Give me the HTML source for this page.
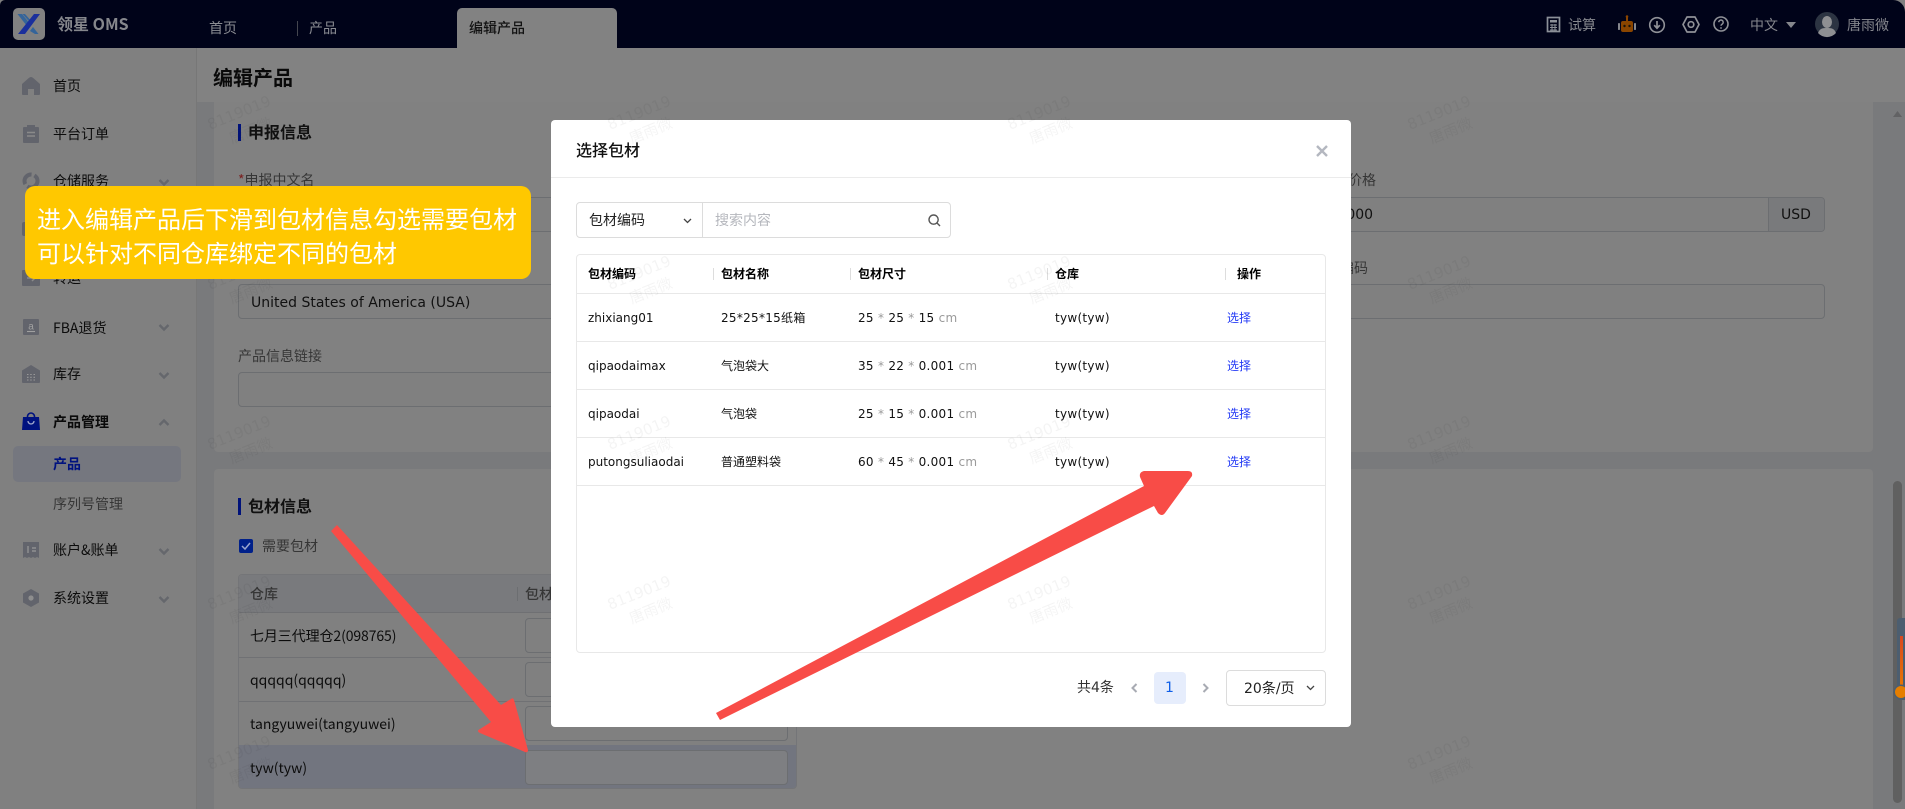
<!DOCTYPE html>
<html lang="zh"><head><meta charset="utf-8"><title>编辑产品</title>
<style>
*{box-sizing:border-box;margin:0;padding:0}
html,body{width:1905px;height:809px;overflow:hidden;background:#fff}
body{position:relative;font-family:"DejaVu Sans","Noto Sans CJK SC",sans-serif;font-size:14px;color:#111}
div{position:absolute}
.t{position:absolute;line-height:20px;white-space:nowrap}
.n{font-family:"Noto Sans CJK SC",sans-serif;font-size:14px}
.b{font-weight:700}
.s{color:#0c0c0c}
.l{color:#363636}
.inp{position:absolute;border:1px solid #6c6e71;border-radius:4px;background:#808080}
.bar{position:absolute;width:3px;height:17px;background:#00127a}
svg{position:absolute;overflow:visible}
.c{font-size:12px;color:#111}
.h{font-size:12px;font-weight:700;color:#000}
.d{letter-spacing:.28px}
.g{color:#9a9a9a}
.ln{position:absolute;height:1px;background:#e8e8e8;left:576px;width:750px}
.sp{position:absolute;width:1px;height:12px;top:268px;background:#ddd}
.sel{font-size:12px;color:#2239f5}
.ch{fill:none;stroke:#65676c;stroke-width:2.4}
.ic{fill:#62646c}
</style></head><body>

<!-- base page -->
<div style="left:0;top:0;width:1905px;height:809px;background:#808080"></div>
<div style="left:196px;top:48px;width:1px;height:761px;background:#777"></div>
<div style="left:197px;top:102px;width:1708px;height:707px;background:#797a7c"></div>
<div style="left:214px;top:102px;width:1659px;height:350px;background:#818181;border-radius:0 0 4px 4px"></div>
<div style="left:214px;top:469px;width:1659px;height:340px;background:#818181;border-radius:4px 4px 0 0"></div>
<div style="left:197px;top:48px;width:1708px;height:54px;background:#828282"></div>

<!-- header -->
<div style="left:0;top:0;width:1905px;height:48px;background:#000319;border-radius:5px 12px 0 0"></div>
<svg style="left:13px;top:8px" width="32" height="32" viewBox="0 0 32 32"><rect width="32" height="32" rx="5" fill="#818181"/><path d="M4.500 6H9l9 11-2.500 3z" fill="#34649a"/><path d="M9.500 6H12l8 9-1.200 1.500z" fill="#34649a"/><path d="M21 6h6L12 26H5z" fill="#1a2f9c"/><path d="M17 23l3-4 5.500 7H22z" fill="#34649a"/></svg>
<div class="t b" style="left:57px;top:13px;font-size:16px;color:#85878c;font-family:'Noto Sans CJK SC',sans-serif">领星 OMS</div>
<div class="t n" style="left:209px;top:18px;color:#8a8c92">首页</div>
<div style="left:297px;top:21px;width:1px;height:15px;background:#44464f"></div>
<div class="t n" style="left:309px;top:18px;color:#8a8c92">产品</div>
<div style="left:457px;top:8px;width:160px;height:40px;background:#828282;border-radius:5px 5px 0 0"></div>
<div class="t n" style="left:469px;top:18px;color:#111;font-weight:500">编辑产品</div>

<svg style="left:1546px;top:16px" width="16" height="17" viewBox="0 0 16 17" fill="none"><rect x="1.500" y="1.500" width="12" height="14" stroke="#8b9098" stroke-width="1.700"/><rect x="4" y="4" width="7" height="2.500" fill="#8b9098"/><path d="M4 9h7M4 11.500h7M4 14h7M6 8v7M9 8v7" stroke="#8b9098"/></svg>
<div class="t n" style="left:1568px;top:15px;color:#85878d">试算</div>
<svg style="left:1618px;top:15px" width="18" height="17" viewBox="0 0 18 17"><rect x="3" y="6" width="12" height="11" rx="2" fill="#8a4500"/><rect x="8" y="1.500" width="2" height="5" fill="#8a4500"/><circle cx="9" cy="1.500" r="1.300" fill="#8a4500"/><rect x="0" y="8" width="2" height="7" rx=".8" fill="#85878d"/><rect x="16" y="8" width="2" height="7" rx=".8" fill="#85878d"/><circle cx="6.500" cy="11" r="1.200" fill="#1a1208"/><circle cx="11.500" cy="11" r="1.200" fill="#1a1208"/></svg>
<svg style="left:1648px;top:17px" width="18" height="17" viewBox="0 0 18 17" fill="none"><circle cx="9" cy="8" r="7.300" stroke="#8f9197" stroke-width="1.600"/><path d="M9 4v7.500M6.200 8.200L9 11.200l2.800-3" stroke="#8f9197" stroke-width="1.700"/></svg>
<svg style="left:1682px;top:16px" width="18" height="17" viewBox="0 0 18 17" fill="none"><path d="M5 1h8l4 7.500-4 7.500H5L1 8.500z" stroke="#8f9197" stroke-width="1.700" stroke-linejoin="round"/><circle cx="9" cy="8.500" r="2.800" stroke="#8f9197" stroke-width="1.700"/></svg>
<svg style="left:1713px;top:16px" width="16" height="16" viewBox="0 0 16 16" fill="none"><circle cx="8" cy="8" r="7" stroke="#8f9197" stroke-width="1.600"/><path d="M5.800 6.200a2.200 2.200 0 1 1 3.400 1.900c-.8.500-1.200.9-1.200 1.700" stroke="#8f9197" stroke-width="1.500"/><circle cx="8" cy="12" r=".9" fill="#8f9197"/></svg>
<div class="t n" style="left:1750px;top:15px;color:#85878d">中文</div>
<svg style="left:1786px;top:22px" width="10" height="6" viewBox="0 0 10 6"><path d="M0 0h10L5 6z" fill="#85878d"/></svg>
<svg style="left:1815px;top:12px" width="24" height="24" viewBox="0 0 24 24"><circle cx="12" cy="12" r="12" fill="#2c3442"/><ellipse cx="12" cy="10" rx="5" ry="6" fill="#8e8f92"/><path d="M3 21c2-5 5-5 9-5s7 0 9 5a12 12 0 0 1-18 0z" fill="#8e8f92"/></svg>
<div class="t n" style="left:1847px;top:15px;color:#85878d">唐雨微</div>

<!-- sidebar -->
<svg style="left:22px;top:77px" width="18" height="18" viewBox="0 0 18 18"><path class="ic" d="M9 0c1 0 1.500.5 2.500 1.300L18 7v10a1 1 0 0 1-1 1h-5v-6H6v6H1a1 1 0 0 1-1-1V7l6.500-5.700C7.500.5 8 0 9 0z"/></svg>
<div class="t n s" style="left:53px;top:76px">首页</div>
<svg style="left:23px;top:125px" width="16" height="18" viewBox="0 0 16 18"><path class="ic" d="M1 2h3V0h8v2h3a1 1 0 0 1 1 1v14a1 1 0 0 1-1 1H1a1 1 0 0 1-1-1V3a1 1 0 0 1 1-1z"/><path d="M4 7.500h8M4 11h8" stroke="#8a8a8a" stroke-width="1.400"/></svg>
<div class="t n s" style="left:53px;top:124px">平台订单</div>
<svg style="left:22px;top:172px" width="18" height="18" viewBox="0 0 18 18" fill="none"><circle cx="9" cy="9" r="6.500" stroke="#62646c" stroke-width="4" stroke-dasharray="14 3"/></svg>
<div class="t n s" style="left:53px;top:171px">仓储服务</div>
<svg style="left:158px;top:179px" width="12" height="7" viewBox="0 0 12 7"><path class="ch" d="M1.500 1l4.500 4.500L10.500 1"/></svg>
<div style="left:22px;top:222px;width:18px;height:14px;background:#62646c;border-radius:2px"></div>
<svg style="left:22px;top:270px" width="18" height="18" viewBox="0 0 18 18"><rect width="18" height="16" rx="1" fill="#62646c"/><path d="M5 8h8M10 5l3 3-3 3" stroke="#8a8a8a" stroke-width="1.500" fill="none"/></svg>
<div class="t n s" style="left:53px;top:268px">转运</div>

<svg style="left:23px;top:319px" width="16" height="16" viewBox="0 0 16 16"><rect width="16" height="16" rx="1" fill="#62646c"/><text x="8" y="10.500" font-size="10" text-anchor="middle" fill="#a0a0a0" font-family="Liberation Sans, sans-serif">a</text><path d="M4 12.500h8" stroke="#a0a0a0" stroke-width="1.100"/></svg>
<div class="t n s" style="left:53px;top:318px">FBA退货</div>
<svg style="left:158px;top:324px" width="12" height="7" viewBox="0 0 12 7"><path class="ch" d="M1.500 1l4.500 4.500L10.500 1"/></svg>
<svg style="left:22px;top:365px" width="18" height="18" viewBox="0 0 18 18"><path class="ic" d="M9 0l9 5.500V17a1 1 0 0 1-1 1H1a1 1 0 0 1-1-1V5.500z"/><path d="M5 9.500h1.500M8.200 9.500h1.500M11.500 9.500H13M5 12.300h1.500M8.200 12.300h1.500M11.500 12.300H13M5 15h1.500M8.200 15h1.500M11.500 15H13" stroke="#999" stroke-width="1.100"/></svg>
<div class="t n s" style="left:53px;top:364px">库存</div>
<svg style="left:158px;top:372px" width="12" height="7" viewBox="0 0 12 7"><path class="ch" d="M1.500 1l4.500 4.500L10.500 1"/></svg>
<svg style="left:22px;top:413px" width="18" height="17" viewBox="0 0 18 17"><path d="M1 4h16l1 13H0z" fill="#00127f"/><path d="M5.500 5V3.500a3.500 3.500 0 0 1 7 0V5" stroke="#00127f" stroke-width="1.600" fill="none"/><path d="M6 8a3 3 0 0 0 6 0" stroke="#a0a8cc" stroke-width="1.300" fill="none"/></svg>
<div class="t n b" style="left:53px;top:412px;color:#0a0a0a">产品管理</div>
<svg style="left:158px;top:419px" width="12" height="7" viewBox="0 0 12 7"><path class="ch" d="M1.500 6L6 1.500 10.500 6"/></svg>
<div style="left:13px;top:446px;width:168px;height:36px;background:#75777f;border-radius:5px"></div>
<div class="t n b" style="left:53px;top:454px;color:#00127f">产品</div>
<div class="t n l" style="left:53px;top:494px">序列号管理</div>
<svg style="left:23px;top:542px" width="16" height="16" viewBox="0 0 16 16"><path class="ic" d="M0 0h16v16l-2-1-2 1-2-1-2 1-2-1-2 1-2-1-2 1z"/><path d="M9 6h4M9 9h4M5 4v7" stroke="#999" stroke-width="1.200"/></svg>
<div class="t n s" style="left:53px;top:540px">账户&amp;账单</div>
<svg style="left:158px;top:548px" width="12" height="7" viewBox="0 0 12 7"><path class="ch" d="M1.500 1l4.500 4.500L10.500 1"/></svg>
<svg style="left:23px;top:589px" width="16" height="18" viewBox="0 0 16 18"><path class="ic" d="M8 0l8 4.500v9L8 18l-8-4.500v-9z"/><circle cx="8" cy="9" r="2.600" fill="#8e8e8e"/></svg>
<div class="t n s" style="left:53px;top:588px">系统设置</div>
<svg style="left:158px;top:596px" width="12" height="7" viewBox="0 0 12 7"><path class="ch" d="M1.500 1l4.500 4.500L10.500 1"/></svg>

<!-- page content -->
<div class="t b" style="left:213px;top:66px;font-size:20px;line-height:22px;color:#0a0a0a;font-family:'Noto Sans CJK SC',sans-serif">编辑产品</div>
<div class="bar" style="left:238px;top:124px"></div>
<div class="t b" style="left:248px;top:121px;font-size:16px;color:#111;font-family:'Noto Sans CJK SC',sans-serif">申报信息</div>
<div class="t n l" style="left:238px;top:170px"><span style="color:#7a1f1f">*</span>申报中文名</div>
<div class="inp" style="left:238px;top:197px;width:330px;height:35px"></div>
<div class="inp" style="left:238px;top:284px;width:330px;height:35px"></div>
<div class="t" style="left:251px;top:293px;color:#111">United States of America (USA)</div>
<div class="t n l" style="left:238px;top:346px">产品信息链接</div>
<div class="inp" style="left:238px;top:372px;width:330px;height:35px"></div>

<div class="inp" style="left:1300px;top:197px;width:525px;height:35px"></div>
<div style="left:1768px;top:198px;width:56px;height:33px;background:#797a7c;border-left:1px solid #6c6e71;border-radius:0 4px 4px 0"></div>
<div class="t" style="left:1781px;top:205px;color:#111">USD</div>
<div class="t n l" style="left:1348px;top:170px">价格</div>
<div class="t" style="left:1333px;top:205px;color:#111">0.000</div>
<div class="t n l" style="left:1340px;top:258px">编码</div>
<div class="inp" style="left:1300px;top:284px;width:525px;height:35px"></div>

<div class="bar" style="left:238px;top:498px"></div>
<div class="t b" style="left:248px;top:495px;font-size:16px;color:#111;font-family:'Noto Sans CJK SC',sans-serif">包材信息</div>
<svg style="left:239px;top:539px" width="14" height="14" viewBox="0 0 14 14"><rect width="14" height="14" rx="2" fill="#00208a"/><path d="M3 7l3 3 5-6" stroke="#9aa6cf" stroke-width="1.500" fill="none"/></svg>
<div class="t n l" style="left:262px;top:536px">需要包材</div>

<div style="left:238px;top:574px;width:559px;height:215px;border:1px solid #747578;border-radius:4px;background:#808080"></div>
<div style="left:239px;top:575px;width:557px;height:38px;background:#797a7d;border-bottom:1px solid #6f7073;border-radius:4px 4px 0 0"></div>
<div style="left:239px;top:657px;width:557px;height:1px;background:#707174"></div>
<div style="left:239px;top:701px;width:557px;height:1px;background:#707174"></div>
<div style="left:239px;top:745px;width:557px;height:43px;background:#72757f;border-radius:0 0 3px 3px"></div>
<div style="left:517px;top:587px;width:1px;height:14px;background:#6c6e71"></div>
<div class="t n l" style="left:250px;top:584px;font-weight:500">仓库</div>
<div class="t n l" style="left:525px;top:584px;font-weight:500">包材</div>
<div class="t n s" style="left:250px;top:626px;letter-spacing:-.1px">七月三代理仓2(098765)</div>
<div class="t n s" style="left:250px;top:670px">qqqqq(qqqqq)</div>
<div class="t n s" style="left:250px;top:714px">tangyuwei(tangyuwei)</div>
<div class="t n s" style="left:250px;top:758px">tyw(tyw)</div>
<div class="inp" style="left:525px;top:618px;width:263px;height:35px"></div>
<div class="inp" style="left:525px;top:662px;width:263px;height:35px"></div>
<div class="inp" style="left:525px;top:706px;width:263px;height:35px"></div>
<div class="inp" style="left:525px;top:750px;width:263px;height:35px;background:#7e7f82"></div>

<!-- right scrollbars -->
<svg style="left:1893px;top:111px" width="9" height="6" viewBox="0 0 9 6"><path d="M0 6l4.500-6L9 6z" fill="#626264"/></svg>
<div style="left:1893px;top:481px;width:9px;height:322px;background:#606060;border-radius:5px"></div>
<div style="left:1897px;top:618px;width:8px;height:82px;background:#4c5e70;border-radius:3px 0 0 3px"></div>
<div style="left:1900px;top:636px;width:3px;height:54px;background:linear-gradient(#d8481f,#e87a00)"></div>
<div style="left:1895px;top:686px;width:12px;height:12px;background:#e67e00;border-radius:50%;box-shadow:0 0 0 1.500px #4c5e70"></div>

<!-- modal -->
<div style="left:551px;top:120px;width:800px;height:607px;background:#fff;border-radius:4px"></div>
<div class="t" style="left:576px;top:139px;font-size:16px;color:#111;font-family:'Noto Sans CJK SC',sans-serif;font-weight:500">选择包材</div>
<svg style="left:1316px;top:145px" width="12" height="12" viewBox="0 0 12 12"><path d="M1 1l10 10M11 1L1 11" stroke="#b4b7c0" stroke-width="2.400"/></svg>
<div style="left:551px;top:177px;width:800px;height:1px;background:#ebebeb"></div>

<div style="left:576px;top:202px;width:375px;height:36px;border:1px solid #dcdcdc;border-radius:4px"></div>
<div style="left:702px;top:203px;width:1px;height:34px;background:#dcdcdc"></div>
<div class="t n" style="left:589px;top:210px;color:#222">包材编码</div>
<svg style="left:683px;top:218px" width="9" height="6" viewBox="0 0 9 6" fill="none"><path d="M1 1l3.500 3.500L8 1" stroke="#444" stroke-width="1.300"/></svg>
<div class="t n" style="left:715px;top:210px;color:#b5b7bd">搜索内容</div>
<svg style="left:928px;top:214px" width="13" height="13" viewBox="0 0 13 13" fill="none"><circle cx="5.600" cy="5.600" r="4.600" stroke="#555" stroke-width="1.400"/><path d="M9 9l3 3" stroke="#555" stroke-width="1.400"/></svg>

<div style="left:576px;top:254px;width:750px;height:399px;border:1px solid #e8e8e8;border-radius:4px"></div>
<div class="sp" style="left:713px"></div><div class="sp" style="left:850px"></div><div class="sp" style="left:1047px"></div><div class="sp" style="left:1225px"></div>
<div class="t h" style="left:588px;top:264px">包材编码</div>
<div class="t h" style="left:721px;top:264px">包材名称</div>
<div class="t h" style="left:858px;top:264px">包材尺寸</div>
<div class="t h" style="left:1055px;top:264px">仓库</div>
<div class="t h" style="left:1237px;top:264px">操作</div>
<div class="ln" style="top:293px"></div><div class="ln" style="top:341px"></div><div class="ln" style="top:389px"></div><div class="ln" style="top:437px"></div><div class="ln" style="top:485px"></div>

<div class="t c" style="left:588px;top:308px">zhixiang01</div>
<div class="t c d" style="left:721px;top:308px">25*25*15纸箱</div>
<div class="t c d" style="left:858px;top:308px">25 <span class="g">*</span> 25 <span class="g">*</span> 15 <span class="g">cm</span></div>
<div class="t c d" style="left:1055px;top:308px">tyw(tyw)</div>
<div class="t sel" style="left:1227px;top:308px">选择</div>

<div class="t c" style="left:588px;top:356px">qipaodaimax</div>
<div class="t c" style="left:721px;top:356px">气泡袋大</div>
<div class="t c d" style="left:858px;top:356px">35 <span class="g">*</span> 22 <span class="g">*</span> 0.001 <span class="g">cm</span></div>
<div class="t c d" style="left:1055px;top:356px">tyw(tyw)</div>
<div class="t sel" style="left:1227px;top:356px">选择</div>

<div class="t c" style="left:588px;top:404px">qipaodai</div>
<div class="t c" style="left:721px;top:404px">气泡袋</div>
<div class="t c d" style="left:858px;top:404px">25 <span class="g">*</span> 15 <span class="g">*</span> 0.001 <span class="g">cm</span></div>
<div class="t c d" style="left:1055px;top:404px">tyw(tyw)</div>
<div class="t sel" style="left:1227px;top:404px">选择</div>

<div class="t c" style="left:588px;top:452px">putongsuliaodai</div>
<div class="t c" style="left:721px;top:452px">普通塑料袋</div>
<div class="t c d" style="left:858px;top:452px">60 <span class="g">*</span> 45 <span class="g">*</span> 0.001 <span class="g">cm</span></div>
<div class="t c d" style="left:1055px;top:452px">tyw(tyw)</div>
<div class="t sel" style="left:1227px;top:452px">选择</div>

<div class="t" style="left:1077px;top:678px;color:#333">共4条</div>
<svg style="left:1131px;top:683px" width="7" height="10" viewBox="0 0 7 10" fill="none"><path d="M5.500 1L1.500 5l4 4" stroke="#a8abb3" stroke-width="2"/></svg>
<div style="left:1154px;top:672px;width:32px;height:32px;background:#e6edfc;border-radius:4px"></div>
<div class="t" style="left:1165px;top:678px;color:#0f5fe8">1</div>
<svg style="left:1202px;top:683px" width="7" height="10" viewBox="0 0 7 10" fill="none"><path d="M1.500 1l4 4-4 4" stroke="#a8abb3" stroke-width="2"/></svg>
<div style="left:1226px;top:670px;width:100px;height:36px;border:1px solid #dcdcdc;border-radius:4px"></div>
<div class="t" style="left:1244px;top:679px;color:#222">20条/页</div>
<svg style="left:1306px;top:685px" width="9" height="6" viewBox="0 0 9 6" fill="none"><path d="M1 1l3.500 3.500L8 1" stroke="#444" stroke-width="1.300"/></svg>

<!-- watermark -->
<svg style="left:0;top:0" width="1905" height="809" font-size="15" fill="#000" fill-opacity=".042">
<text transform="translate(210 130) rotate(-22)">8119019<tspan x="15" y="21">唐雨微</tspan></text>
<text transform="translate(610 130) rotate(-22)">8119019<tspan x="15" y="21">唐雨微</tspan></text>
<text transform="translate(1010 130) rotate(-22)">8119019<tspan x="15" y="21">唐雨微</tspan></text>
<text transform="translate(1410 130) rotate(-22)">8119019<tspan x="15" y="21">唐雨微</tspan></text>
<text transform="translate(210 290) rotate(-22)">8119019<tspan x="15" y="21">唐雨微</tspan></text>
<text transform="translate(610 290) rotate(-22)">8119019<tspan x="15" y="21">唐雨微</tspan></text>
<text transform="translate(1010 290) rotate(-22)">8119019<tspan x="15" y="21">唐雨微</tspan></text>
<text transform="translate(1410 290) rotate(-22)">8119019<tspan x="15" y="21">唐雨微</tspan></text>
<text transform="translate(210 450) rotate(-22)">8119019<tspan x="15" y="21">唐雨微</tspan></text>
<text transform="translate(610 450) rotate(-22)">8119019<tspan x="15" y="21">唐雨微</tspan></text>
<text transform="translate(1010 450) rotate(-22)">8119019<tspan x="15" y="21">唐雨微</tspan></text>
<text transform="translate(1410 450) rotate(-22)">8119019<tspan x="15" y="21">唐雨微</tspan></text>
<text transform="translate(210 610) rotate(-22)">8119019<tspan x="15" y="21">唐雨微</tspan></text>
<text transform="translate(610 610) rotate(-22)">8119019<tspan x="15" y="21">唐雨微</tspan></text>
<text transform="translate(1010 610) rotate(-22)">8119019<tspan x="15" y="21">唐雨微</tspan></text>
<text transform="translate(1410 610) rotate(-22)">8119019<tspan x="15" y="21">唐雨微</tspan></text>
<text transform="translate(210 770) rotate(-22)">8119019<tspan x="15" y="21">唐雨微</tspan></text>
<text transform="translate(1410 770) rotate(-22)">8119019<tspan x="15" y="21">唐雨微</tspan></text>
</svg>

<!-- callout -->
<div style="left:25px;top:186px;width:506px;height:93px;background:#ffc800;border-radius:10px"></div>
<div class="t" style="left:37px;top:201px;font-size:24px;line-height:34px;color:#fff;font-family:'Noto Sans CJK SC',sans-serif">进入编辑产品后下滑到包材信息勾选需要包材</div>
<div class="t" style="left:37px;top:235px;font-size:24px;line-height:34px;color:#fff;font-family:'Noto Sans CJK SC',sans-serif">可以针对不同仓库绑定不同的包材</div>

<!-- arrows -->
<svg style="left:0;top:0" width="1905" height="809">
<path d="M331 531L337 525L501 705L511 699Q513 697 514 700L528 750Q528 753 525 752L480 733Q476 731 480 729L491 722Z" fill="#f84c47"/>
<path d="M716 713L720 720L1154 506L1158 513Q1162 517 1165 513L1192 476Q1193 471 1188 471L1144 471Q1139 472 1140 477L1144 486Z" fill="#f84c47"/>
</svg>
</body></html>
